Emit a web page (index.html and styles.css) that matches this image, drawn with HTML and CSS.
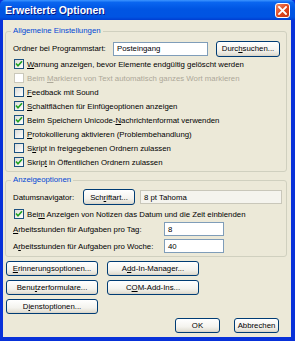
FILE: index.html
```html
<!DOCTYPE html>
<html lang="de">
<head>
    <meta charset="UTF-8">
    <meta name="viewport" content="width=device-width, initial-scale=1.0">
    <title>Erweiterte Optionen</title>
    <link rel="stylesheet" href="styles.css">
</head>
<body>

<div class="window">
    <div class="titlebar">
        <span class="title">Erweiterte Optionen</span>
        <span class="close">
            <svg width="9" height="9" viewBox="0 0 9 9"><path d="M1 1 L8 8 M8 1 L1 8" stroke="#fff" stroke-width="1.8" stroke-linecap="square"/></svg>
        </span>
    </div>

    <div class="content">
        <fieldset class="group group-general">
            <legend>Allgemeine Einstellungen</legend>
            <div class="row row-folder">
                <span class="label-folder">Ordner bei Programmstart:</span>
                <span class="textbox folder-box">Posteingang</span>
                <button class="btn btn-browse">Durc<u>h</u>suchen...</button>
            </div>
            <div class="check-row">
                <span class="checkbox checked"><svg width="8" height="8" viewBox="0 0 8 8"><path d="M1 3.5 L3 5.8 L7 1.2" fill="none" stroke="#21a121" stroke-width="1.6"/></svg></span>
                <span><u>W</u>arnung anzeigen, bevor Elemente endgültig gelöscht werden</span>
            </div>
            <div class="check-row disabled">
                <span class="checkbox"></span>
                <span>Beim <u>M</u>arkieren von Text automatisch ganzes Wort markieren</span>
            </div>
            <div class="check-row">
                <span class="checkbox"></span>
                <span><u>F</u>eedback mit Sound</span>
            </div>
            <div class="check-row">
                <span class="checkbox checked"><svg width="8" height="8" viewBox="0 0 8 8"><path d="M1 3.5 L3 5.8 L7 1.2" fill="none" stroke="#21a121" stroke-width="1.6"/></svg></span>
                <span><u>S</u>chaltflächen für Einfügeoptionen anzeigen</span>
            </div>
            <div class="check-row">
                <span class="checkbox checked"><svg width="8" height="8" viewBox="0 0 8 8"><path d="M1 3.5 L3 5.8 L7 1.2" fill="none" stroke="#21a121" stroke-width="1.6"/></svg></span>
                <span>Beim Speichern Unicode-<u>N</u>achrichtenformat verwenden</span>
            </div>
            <div class="check-row">
                <span class="checkbox"></span>
                <span><u>P</u>rotokollierung aktivieren (Problembehandlung)</span>
            </div>
            <div class="check-row">
                <span class="checkbox"></span>
                <span>S<u>k</u>ript in freigegebenen Ordnern zulassen</span>
            </div>
            <div class="check-row">
                <span class="checkbox checked"><svg width="8" height="8" viewBox="0 0 8 8"><path d="M1 3.5 L3 5.8 L7 1.2" fill="none" stroke="#21a121" stroke-width="1.6"/></svg></span>
                <span>Skrip<u>t</u> in Öffentlichen Ordnern zulassen</span>
            </div>
        </fieldset>

        <fieldset class="group group-display">
            <legend>Anzeigeoptionen</legend>
            <div class="row row-date">
                <span class="label-date">Datumsnavigator:</span>
                <button class="btn btn-font">Sch<u>r</u>iftart...</button>
                <span class="textbox font-box">8 pt Tahoma</span>
            </div>
            <div class="check-row check-notes">
                <span class="checkbox checked"><svg width="8" height="8" viewBox="0 0 8 8"><path d="M1 3.5 L3 5.8 L7 1.2" fill="none" stroke="#21a121" stroke-width="1.6"/></svg></span>
                <span>Bei<u>m</u> Anzeigen von Notizen das Datum und die Zeit einblenden</span>
            </div>
            <div class="row row-hours row-day">
                <span class="label-hours"><u>A</u>rbeitsstunden für Aufgaben pro Tag:</span>
                <span class="textbox hours-box">8</span>
            </div>
            <div class="row row-hours row-week">
                <span class="label-hours">A<u>r</u>beitsstunden für Aufgaben pro Woche:</span>
                <span class="textbox hours-box">40</span>
            </div>
        </fieldset>

        <div class="button-grid">
            <button class="btn"><u>E</u>rinnerungsoptionen...</button>
            <button class="btn">A<u>d</u>d-In-Manager...</button>
            <button class="btn">Benu<u>t</u>zerformulare...</button>
            <button class="btn">C<u>O</u>M-Add-Ins...</button>
            <button class="btn">D<u>i</u>enstoptionen...</button>
        </div>

        <div class="dialog-buttons">
            <button class="btn btn-dialog">OK</button>
            <button class="btn btn-dialog">Abbrechen</button>
        </div>
    </div>
</div>

</body>
</html>
```

FILE: styles.css
```css
body {
    margin: 0;
    padding: 0;
    font-family: "Liberation Sans", Arial, sans-serif;
    font-size: 7.8px;
    color: #000;
}
.window {
    width: 295px;
    height: 341px;
    background-color: #0831d9;
    display: flex;
    flex-direction: column;
    box-sizing: border-box;
}
.titlebar {
    height: 20px;
    display: flex;
    align-items: center;
    padding-left: 5px;
    background: linear-gradient(#3d95ff 0, #0a66f0 12%, #0055e3 45%, #0054e3 85%, #003dd1 100%);
    border-radius: 5px 5px 0 0;
}
.title {
    color: #fff;
    font-weight: bold;
    font-size: 10.5px;
    text-shadow: 1px 1px 0 #0a1883;
}
.close {
    margin-left: auto;
    margin-right: 5px;
    width: 13px;
    height: 13px;
    border: 1px solid #fff;
    border-radius: 3px;
    background: linear-gradient(135deg, #f08a6a, #e0451b 55%, #c43613);
    display: flex;
    align-items: center;
    justify-content: center;
}
.content {
    flex: 1;
    margin: 0 4px 4px 3px;
    background-color: #ece9d8;
    padding-top: 6px;
}
.group {
    margin: 0 4px 0 2px;
    padding: 4px 4px 2px 7px;
    border: 1px solid #d0d0bf;
    border-radius: 3px;
    min-width: 0;
}
.group legend {
    color: #0046d5;
    padding: 0 2px;
    margin-left: -2px;
    line-height: 10px;
}
.group-display {
    margin-top: 3px;
    padding-bottom: 3px;
}
.row {
    display: flex;
    align-items: center;
}
.row-folder {
    height: 17px;
}
.label-folder {
    width: 100px;
}
.textbox {
    box-sizing: border-box;
    height: 14px;
    border: 1px solid #7f9db9;
    background-color: #fff;
    padding-left: 3px;
    display: flex;
    align-items: center;
}
.folder-box {
    width: 95px;
}
.btn {
    box-sizing: border-box;
    height: 15px;
    padding: 0;
    font-family: "Liberation Sans", Arial, sans-serif;
    font-size: 7.8px;
    color: #000;
    border: 1px solid #003c74;
    border-radius: 3px;
    background: linear-gradient(#ffffff, #f4f3ee 60%, #e3e0d5 90%, #d6d0c5);
}
.btn-browse {
    margin-left: 8px;
    width: 64px;
    height: 16px;
}
.check-row {
    display: flex;
    align-items: center;
    height: 14px;
}
.checkbox {
    box-sizing: border-box;
    width: 10px;
    height: 10px;
    margin: 0 3px 0 1px;
    border: 1px solid #1c5180;
    background: linear-gradient(135deg, #dcdcd7, #ffffff);
    display: flex;
    align-items: center;
    justify-content: center;
}
.disabled {
    color: #aca899;
}
.disabled .checkbox {
    border-color: #cac8bb;
    background: #fff;
}
.row-date {
    height: 16px;
}
.label-date {
    width: 70px;
}
.btn-font {
    width: 52px;
    height: 16px;
}
.font-box {
    margin-left: 5px;
    width: 142px;
    background-color: #f5f4ee;
    border-color: #c9c7ba;
}
.check-notes {
    margin-top: 2px;
}
.row-hours {
    height: 14px;
}
.row-day {
    margin-top: 1px;
}
.row-week {
    margin-top: 3px;
}
.label-hours {
    width: 151px;
}
.hours-box {
    width: 60px;
}
.button-grid {
    display: grid;
    grid-template-columns: 92px 92px;
    column-gap: 9px;
    row-gap: 4px;
    margin: 4px 0 0 3px;
}
.dialog-buttons {
    display: flex;
    justify-content: flex-end;
    gap: 14px;
    margin-top: 4px;
    padding-right: 12px;
}
.btn-dialog {
    width: 45px;
}
```
